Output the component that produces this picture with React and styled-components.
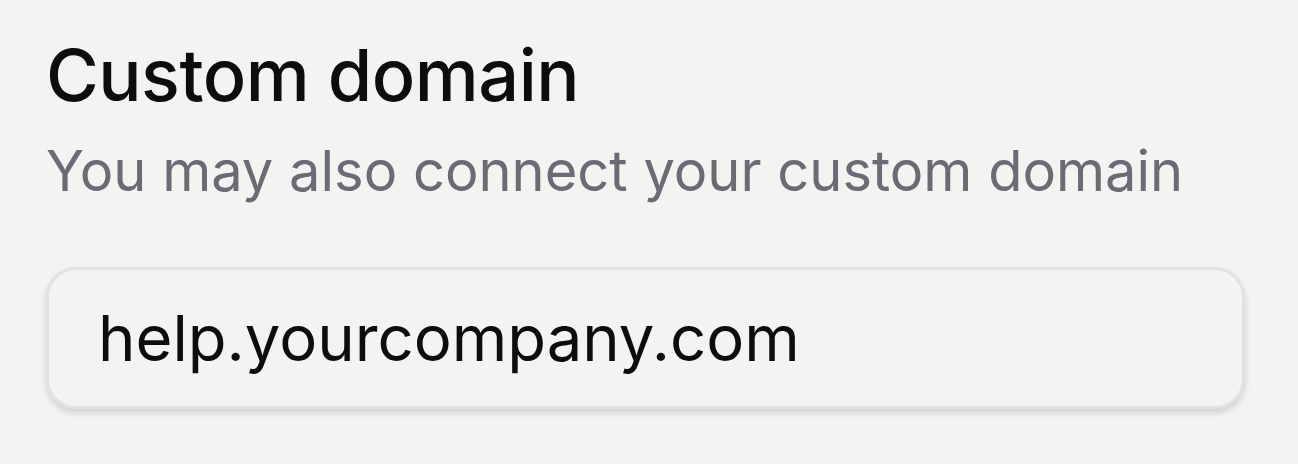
import React from "react";
import styled, { createGlobalStyle } from "styled-components";

const GlobalStyle = createGlobalStyle`
  html, body {
    margin: 0;
    padding: 0;
    background: #f4f3f1;
  }
  body {
    font-family: Inter, "Noto Sans", sans-serif;
  }
`;

const Page = styled.div`
  width: 1298px;
  height: 464px;
  box-sizing: border-box;
  padding: 30px 53px 0 46px;
  background: #f4f3f1;
`;

const Title = styled.h2`
  margin: 0;
  font-size: 72px;
  line-height: 90px;
  font-weight: 500;
  letter-spacing: -0.5px;
  color: #0d0d0d;
`;

const Subtitle = styled.p`
  margin: 13px 0 0;
  font-size: 56px;
  line-height: 76px;
  font-weight: 400;
  color: #6b6a75;
`;

const DomainInput = styled.input`
  display: block;
  box-sizing: border-box;
  width: 100%;
  height: 142px;
  margin-top: 58px;
  padding: 0 49px;
  border: 3px solid #e3e2e1;
  border-radius: 30px;
  background: #f4f3f1;
  box-shadow: 0 4px 6px rgba(0, 0, 0, 0.14);
  font-family: Inter, "Noto Sans", sans-serif;
  font-size: 63.4px;
  color: #0d0d0d;
  outline: none;
`;

export default function App() {
  return (
    <>
      <GlobalStyle />
      <Page>
        <Title>Custom domain</Title>
        <Subtitle>You may also connect your custom domain</Subtitle>
        <DomainInput defaultValue="help.yourcompany.com" readOnly />
      </Page>
    </>
  );
}
